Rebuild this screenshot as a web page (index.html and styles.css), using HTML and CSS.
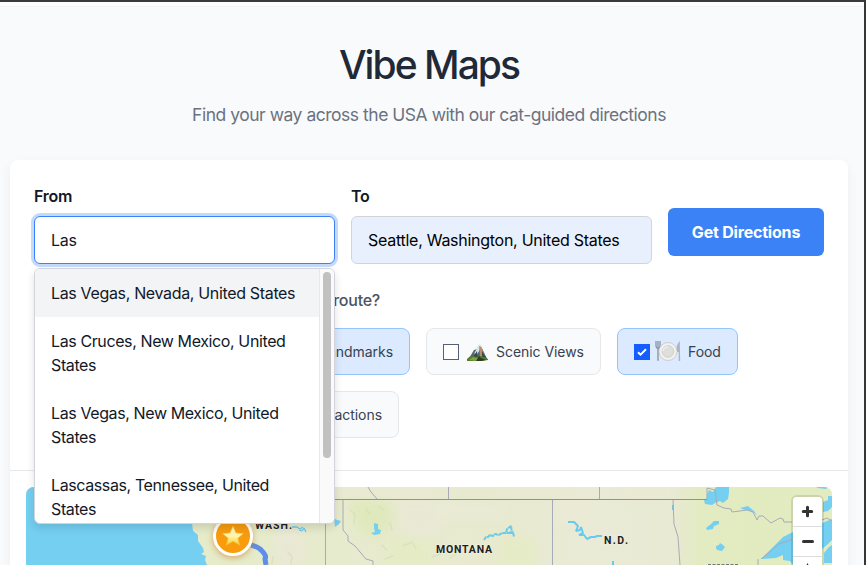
FILE: index.html
```html
<!DOCTYPE html>
<html lang="en">
<head>
<meta charset="utf-8">
<title>Vibe Maps</title>
<link rel="stylesheet" href="styles.css">
</head>
<body>
<div class="page">
  <header class="hero">
    <h1>Vibe Maps</h1>
    <p>Find your way across the USA with our cat-guided directions</p>
  </header>
  <main class="card">
    <section class="planner">
      <form class="route-form">
        <div class="field">
          <label for="from">From</label>
          <input id="from" class="active" type="text" value="Las">
          <div class="suggestions">
            <ul>
              <li class="selected">Las Vegas, Nevada, United States</li>
              <li>Las Cruces, New Mexico, United States</li>
              <li>Las Vegas, New Mexico, United States</li>
              <li>Lascassas, Tennessee, United States</li>
            </ul>
            <div class="track"><div class="thumb"></div></div>
          </div>
        </div>
        <div class="field">
          <label for="to">To</label>
          <input id="to" class="filled" type="text" value="Seattle, Washington, United States">
        </div>
        <button class="go" type="button">Get Directions</button>
      </form>
      <h2>route?</h2>
      <div class="chips">
        <div class="chip on landmarks">Landmarks</div>
        <div class="chip scenic">
          <span class="box"></span>
          <svg class="mountain" viewBox="0 0 21 17">
            <path d="M1 16 7 6l3-1 4 5v6z" fill="#536571"/>
            <path d="M5 15 12 1l2 1 6 13z" fill="#4f6672"/>
            <path d="m12 0-5 10 2-1 1 2 3-6 1 6 2-2-2-7z" fill="#dce5e8"/>
            <path d="m12 2 1 10 3 1 2-1-4-9z" fill="#bd8b68"/>
            <path d="m10 7-4 7h5zm5 0 5 8h-5z" fill="#344a57"/>
            <path d="M0 15q4-5 8-2l5-1 4 1 4 2v1q-10 2-21 1z" fill="#567b2c"/>
            <path d="m2 16 4-3 4 1 4-1-4 4z" fill="#82a43f"/>
            <path d="m9 17 3-5 2 2 5 2-5 1z" fill="#293d21"/>
          </svg>
          <span>Scenic Views</span>
        </div>
        <div class="chip on food">
          <span class="box checked"><svg viewBox="0 0 16 16"><path d="m4 8.3 2.500 2.400L12 5.200" fill="none" stroke="#fff" stroke-width="2"/></svg></span>
          <svg class="plate" viewBox="0 0 26 22">
            <path d="M1 1v5q0 2 2 2.500Q5 8 5 6V1M3 1v19" fill="none" stroke="#8595a6" stroke-width="1.300"/>
            <path d="M3 10v10" stroke="#a7adb3" stroke-width="2" stroke-linecap="round"/>
            <path d="M24.700 1q-4 4-3 11h2v9h1.500z" fill="#adb4bb"/>
            <circle cx="13" cy="11.500" r="9" fill="#f1f1ef" stroke="#c5c5c3" stroke-width=".8"/>
            <circle cx="13" cy="11.500" r="5.800" fill="#dededc" stroke="#c8c8c6" stroke-width=".8"/>
            <path d="M8 11a5 5 0 0 1 5-4" stroke="#fafafa" fill="none"/>
          </svg>
          <span>Food</span>
        </div>
      </div>
      <div class="chips second"><div class="chip attractions">Attractions</div></div>
    </section>
    <section class="map-wrap">
      <div class="map">
        <svg class="terrain" viewBox="26 487 806 78">
          <defs>
            <linearGradient id="land">
              <stop offset="0" stop-color="#e6ebc4"/><stop offset=".38" stop-color="#e7ebce"/>
              <stop offset=".6" stop-color="#e8ead0"/><stop offset=".7" stop-color="#eaead7"/>
              <stop offset=".8" stop-color="#e9ead4"/><stop offset=".84" stop-color="#e2ebc1"/>
              <stop offset="1" stop-color="#e2ecc0"/>
            </linearGradient>
            <linearGradient id="star" x2="0" y2="1"><stop stop-color="#fff6c5"/><stop offset=".55" stop-color="#fff5a8"/><stop offset="1" stop-color="#f8c928"/></linearGradient>
            <filter id="soft" x="-30%" y="-50%" width="160%" height="200%" color-interpolation-filters="sRGB"><feGaussianBlur stdDeviation="5"/></filter>
            <filter id="glow" x="-50%" y="-50%" width="200%" height="200%" color-interpolation-filters="sRGB"><feDropShadow dx="0" dy="2" stdDeviation="3" flood-color="#c47816" flood-opacity=".55"/></filter>
          </defs>
          <rect x="26" y="487" width="806" height="78" fill="url(#land)"/>
          <g filter="url(#soft)">
            <path d="M348 500h38l10 19-18 20-20-8z" fill="#dfe9bd"/>
            <path d="M398 501h43v27l-20 15-24-20zM275 530h28v35h-28z" fill="#e9e8d5"/>
            <path d="M438 503h65v15h-65zM555 501h35v22h-35z" fill="#eaead5"/>
            <path d="M386 538h46v27h-46zM500 538h35v27h-35z" fill="#e5ebc5"/>
            <path d="M340 487h90v10h-90zM500 487h80v9h-80zM620 488h52v9h-52z" fill="#ebe9d4"/>
          </g>
          <g fill="none" stroke="#d4dab4" stroke-width="1.500" stroke-linecap="round" opacity=".55">
            <path d="m350 510 5 4-1 10m12-15 4 5m8-8 6 4m6 13 2 7m-10 15 5 5m16-4 9-4 4 7m-31 10 8-3m39 1 9-3m9 4 6-4m-183 3-2 13m17-18 4 5-2 12"/>
          </g>
          <g fill="#74cff1">
            <path d="M26 487h160v36h6l1 8 5 4v6l5 7 1 4-3 2 5 2-1 4 2 5H26z"/>
            <path d="m334 518 3 2 4 1-2 3-4 3zM374 523l4 1v5l3 1-1 4-6 1-3-2 4-1-1-4z"/>
            <path d="M707 494l2-4 4 2 3-5h13v6l-1 6-5 4-3-2-5 2-3 2-7-1-1-4 3-2z"/>
            <path d="m706 528 5-4 3-3h5v3l-5 2-1 3-6 1zM716 546l3-1 1-2 3 2 2 2-3 4-5-1-1-2z"/>
            <path d="m740 508 8-2 6 5 3 4-5-4-7-1zM816 487h12l-2 2-8-1z"/>
            <path d="m761 559 10-10 12-12 10-5h29v33h-29l-3-4-7-1v-5l-7 3zM822 523l10-4v21l-5 5-5 4zM824 553l5-6 3-2v18h-8zM823 502l5-2v-4h4v11l-4 4-5 1z"/>
          </g>
          <g fill="none" stroke="#65cbf1" stroke-width="2" stroke-linejoin="bevel">
            <path d="m292 527 5 0 3 2 3-2m-4 3 3 1 2-3 2 4" stroke-width="1.300"/>
            <path d="m484 540 2-3 2 0 2-2 3 1 2-2 4 1 3-2 4 0 1-4 4-3 1 7-5 0 6-1 1 5" stroke-dasharray="4 .5"/>
            <path d="M568 522h6l4 4-2 5 4-1 1-3 2 6-4 2 5 0 3 4 4-2h4l2-1h5M613 561v4M673 505v5"/>
          </g>
          <g fill="none" stroke="#a9aab7" stroke-width="1">
            <path d="M334 499.500h373" stroke="#8f90a3"/>
            <path d="M448.500 487v12M599.500 487v12M368 487l3 5 6 7M552.500 500v65M325.500 523v42M343 500v30l5 6v5l7 5 11 13 7 2v4M673 500l1 24 4 13 2 28"/>
            <path d="M707 499v-11l8 2 2 15 7 3 7 1 1 3 15-2 6 2 4 8 2-4h4l8 7 9-5 3 1 1 3h8M822 520l5-2 5 3M761 559l18-15 14-5M758 559v6"/>
          </g>
          <path d="M251 545q8 2 11 6 5 5 3 8l1 6" fill="none" stroke="#5e8ee7" stroke-width="5"/>
          <g class="map-label">
            <text x="255" y="528.500" textLength="37">WASH.</text>
            <text x="436" y="553" textLength="56">MONTANA</text>
            <text x="604" y="544" textLength="24">N.D.</text>
          </g>
          <path d="M708 564.500h30" stroke="#777" stroke-dasharray="3 1.500"/>
          <g filter="url(#glow)">
            <circle cx="233" cy="536" r="18.500" fill="#f89c0e" stroke="#fff" stroke-width="3"/>
          </g>
          <path d="m233 526 3 7 7.500.5-5.700 4.700 2 7-6.800-3.900-6.800 3.900 2-7-5.700-4.700 7.500-.5z" fill="url(#star)" stroke="#f5c336" stroke-width=".5"/>
        </svg>
        <div class="controls">
          <button type="button" aria-label="Zoom in"><svg viewBox="0 0 29 29"><path d="M14.500 10.300v8.400M10.300 14.500h8.400" stroke="#333" stroke-width="3" stroke-linecap="round"/></svg></button>
          <button type="button" aria-label="Zoom out"><svg viewBox="0 0 29 29"><path d="M10.500 14.500h9" stroke="#333" stroke-width="3" stroke-linecap="round"/></svg></button>
          <button type="button" aria-label="Reset north"><svg viewBox="0 0 29 29"><path d="m14.500 6 4 8h-8z" fill="#333"/></svg></button>
        </div>
      </div>
    </section>
  </main>
</div>
</body>
</html>
```
FILE: styles.css
```css
* { box-sizing: border-box; }
body {
  margin: 0;
  height: 565px;
  overflow: hidden;
  background: #f9fafc;
  color: #111827;
  font: 16px/24px Inter, "Liberation Sans", sans-serif;
}
.page {
  height: 565px;
  overflow: hidden;
  border-top: 2px solid #3a393b;
  border-right: 2px solid #363537;
  padding: 0 16px 0 10px;
}
.page::before {
  content: "";
  display: block;
  height: 4px;
  margin: 0 -16px 0 -10px;
  background: #fdfdfe;
  border-bottom: 1px solid #f3f4f6;
}
.hero { height: 153px; padding-top: 35px; text-align: center; }
h1 {
  margin: 0;
  font-size: 39px;
  line-height: 46px;
  font-weight: 500;
  letter-spacing: -1.95px;
  color: #1f2937;
}
.hero p {
  margin: 15px 0 0;
  font-size: 17.5px;
  line-height: 24px;
  letter-spacing: -.48px;
  color: #6b7280;
}
.card {
  background: #fff;
  border-radius: 8px;
  height: 620px;
  box-shadow: 0 4px 12px rgba(15, 23, 42, .05);
}
.planner { height: 311px; padding: 24px 24px 0; border-bottom: 1px solid #e5e7eb; }
.route-form { display: grid; grid-template-columns: 301px 301px 156px; gap: 16px; }
.field { position: relative; }
label { display: block; height: 24px; margin-bottom: 8px; font-weight: 600; letter-spacing: -.3px; }
input {
  display: block;
  width: 100%;
  height: 48px;
  padding: 12px 16px;
  border: 1px solid #d1d5db;
  border-radius: 6px;
  outline: none;
  font: inherit;
  letter-spacing: -.27px;
  color: #111827;
}
input.active { border-color: #3b82f6; box-shadow: 0 0 0 3px #c4dafc; }
input.filled { background: #e8f0fe; color: #000; }
.go {
  height: 48px;
  margin-top: 24px;
  padding: 0;
  border: 0;
  border-radius: 6px;
  background: #3b82f6;
  color: #fff;
  font: 700 16px/24px Inter, "Liberation Sans", sans-serif;
  letter-spacing: -.2px;
}
.suggestions {
  position: absolute;
  z-index: 5;
  top: 84px;
  left: 0;
  width: 301px;
  height: 256px;
  display: flex;
  overflow: hidden;
  background: #fff;
  border: 1px solid #d1d5db;
  border-radius: 6px;
  box-shadow: 0 4px 8px rgba(0, 0, 0, .12);
}
.suggestions ul { flex: 1; margin: 0; padding: 0; list-style: none; }
.suggestions li { padding: 12px 16px; letter-spacing: -.39px; }
.suggestions .selected { background: #f3f4f6; letter-spacing: -.34px; white-space: nowrap; }
.track { width: 15px; padding: 3px; background: #fafafa; border-left: 1px solid #e8e8e8; }
.thumb { width: 8px; height: 186px; border-radius: 4px; background: #c1c1c1; }
h2 {
  width: 346px;
  margin: 24px 0 16px;
  text-align: right;
  font-size: 16px;
  line-height: 24px;
  font-weight: 500;
  letter-spacing: -.25px;
  color: #4b5563;
}
.chips { display: flex; gap: 16px; padding-left: 219px; }
.second { margin-top: 16px; }
.chip {
  display: flex;
  align-items: center;
  height: 47px;
  padding: 0 16px;
  border: 1px solid #e5e7eb;
  border-radius: 8px;
  background: #f9fafb;
  font-size: 14px;
  letter-spacing: -.05px;
  white-space: nowrap;
  color: #374151;
}
.chip.on { background: #dbeafe; border-color: #93c5fd; }
.landmarks { width: 157px; justify-content: flex-end; }
.scenic { width: 175px; }
.food { width: 121px; }
.attractions { width: 146px; justify-content: flex-end; }
.box { width: 16px; height: 16px; flex: none; border: 1px solid #566078; background: #fff; }
.box.checked { border: 0; background: #155dfc; }
.box svg { display: block; }
.mountain { width: 21px; height: 17px; margin: 2px 8px 0 8px; flex: none; }
.plate { width: 26px; height: 22px; margin: 0 7px 2px 5px; flex: none; }
.map-wrap { padding: 16px; }
.map { position: relative; height: 300px; overflow: hidden; border-radius: 8px; background: #e2ecc0; }
.terrain { display: block; width: 806px; height: 78px; }
.map-label {
  font: 700 10.5px Roboto, "Liberation Sans", sans-serif;
  fill: #20211f;
  stroke: #f4f3df;
  stroke-width: 1px;
  paint-order: stroke;
}
.controls {
  position: absolute;
  top: 10px;
  right: 10px;
  width: 29px;
  overflow: hidden;
  border-radius: 4px;
  background: #fff;
  box-shadow: 0 0 0 2px rgba(0, 0, 0, .1);
}
.controls button { display: block; width: 29px; height: 29px; padding: 0; border: 0; background: #fff; }
.controls button + button { height: 30px; border-top: 1px solid #ddd; }
.controls svg { display: block; width: 29px; height: 29px; }
```
